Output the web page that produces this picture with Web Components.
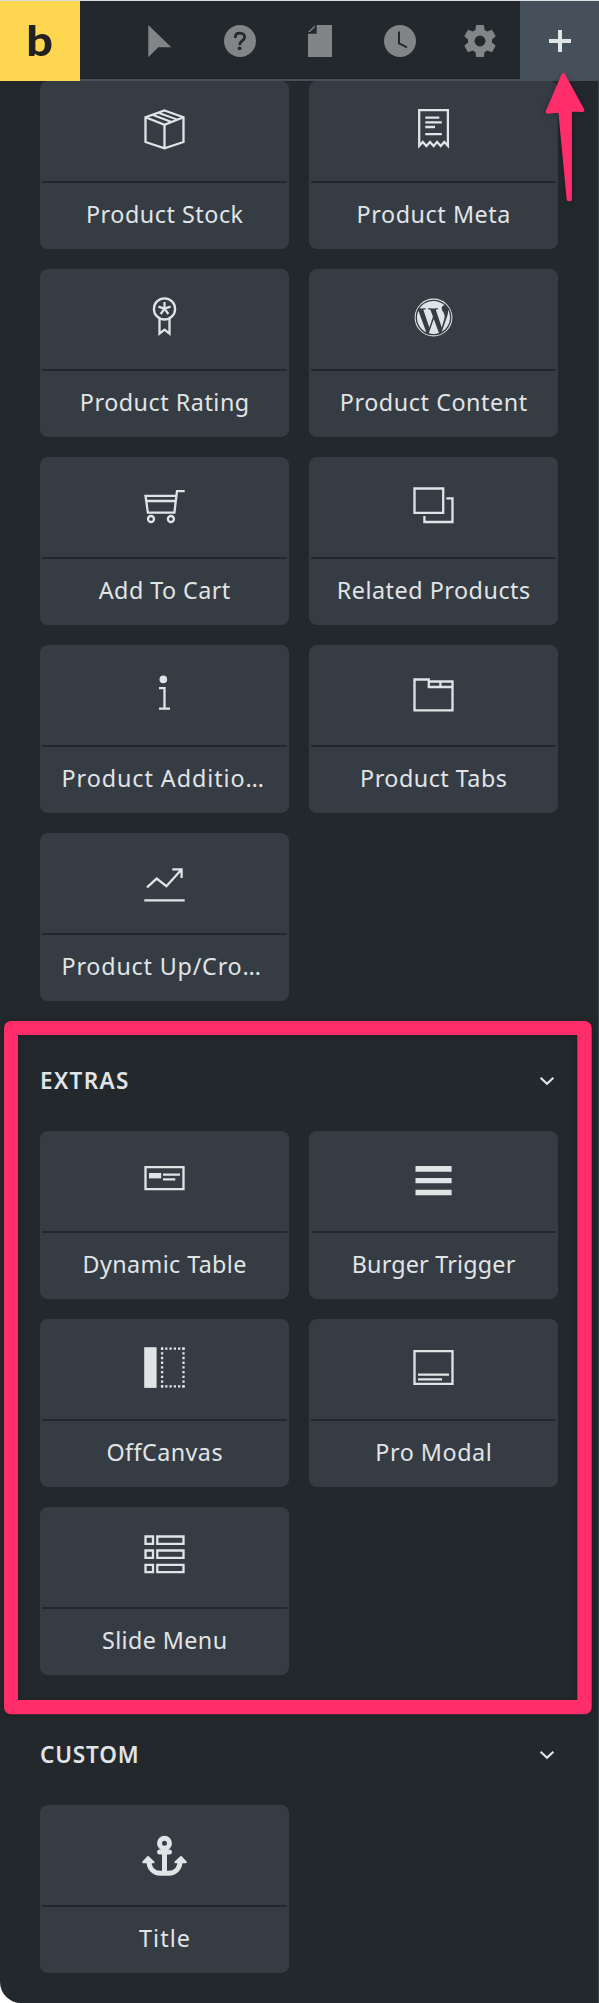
<!DOCTYPE html>
<html lang="en">
<head>
<meta charset="utf-8">
<title>Builder elements</title>
<style>
html, body { margin: 0; background: #fff; }
body { width: 599px; height: 2003px; overflow: hidden; font-family: "Noto Sans", "Open Sans", sans-serif; color: #e1e4e6; }
</style>
</head>
<body>
<builder-panel>
  <tool-bar slot="bar"></tool-bar>
  <element-grid>
    <element-card icon="box" fit="155.7">Product Stock</element-card>
    <element-card icon="receipt" fit="150.7">Product Meta</element-card>
    <element-card icon="ribbon" fit="166">Product Rating</element-card>
    <element-card icon="wordpress" fit="185">Product Content</element-card>
    <element-card icon="cart" fit="131">Add To Cart</element-card>
    <element-card icon="layers" fit="191.3">Related Products</element-card>
    <element-card icon="info" fit="199" clipped>Product Additio…</element-card>
    <element-card icon="tabs" fit="144.7">Product Tabs</element-card>
    <element-card icon="trend" fit="196" clipped>Product Up/Cro…</element-card>
  </element-grid>
  <element-section>
    <fit-text slot="title" fit="86">EXTRAS</fit-text>
    <element-card icon="table" fit="160.7">Dynamic Table</element-card>
    <element-card icon="burger" fit="162">Burger Trigger</element-card>
    <element-card icon="offcanvas" fit="115">OffCanvas</element-card>
    <element-card icon="modal" fit="113.3">Pro Modal</element-card>
    <element-card icon="menu" fit="122.7">Slide Menu</element-card>
  </element-section>
  <element-section>
    <fit-text slot="title" fit="95.7">CUSTOM</fit-text>
    <element-card icon="anchor" fit="49.7">Title</element-card>
  </element-section>
  <highlight-marks slot="marks"></highlight-marks>
</builder-panel>

<script>
const S = 'fill="none" stroke="currentColor" stroke-width="2.3"';
const ICONS = {
  box: `<g ${S}><path d="M24.5 5.5L43.5 12.2V37L24.5 43.4L5.5 37V12.2Z"/><path d="M5.5 12.2L24.5 19.8L43.5 12.2M24.5 19.8V43.4"/><path stroke-width="2" d="M12.4 9.8L31.6 17M18.2 7.8L37.4 14.6"/></g>`,
  receipt: `<g ${S}><path d="M10.2 40.8V5.2H38.9V40.8L35.3 37L31.7 41L28.1 37L24.6 41L21 37L17.4 41L13.8 37Z"/><path d="M16.3 12.7H30.3M16.3 17.4H32.8M16.3 22H26M16.3 29.1H32.8"/></g>`,
  ribbon: `<g ${S}><circle cx="24.5" cy="15.9" r="10.6"/><path d="M19.5 25.5V40.6L24.5 36.6L29.5 40.6V25.5"/><path stroke-width="2.2" d="M24.5 15.6V9M24.5 15.6L30.6 13.6M24.5 15.6L28.3 21M24.5 15.6L20.7 21M24.5 15.6L18.4 13.6"/></g>`,
  wordpress: `<g transform="translate(24.5 24.5) scale(1.585) translate(-12 -12)" fill="currentColor"><path transform="translate(12 12) scale(.965) translate(-12 -12)" d="M21.469 6.825c.84 1.537 1.318 3.3 1.318 5.175 0 3.979-2.156 7.456-5.363 9.325l3.295-9.527c.615-1.54.82-2.771.82-3.864 0-.405-.026-.78-.07-1.11m-7.981.105c.647-.03 1.232-.105 1.232-.105.582-.075.514-.93-.067-.899 0 0-1.755.135-2.88.135-1.064 0-2.85-.15-2.85-.15-.585-.03-.661.855-.075.885 0 0 .54.061 1.125.09l1.68 4.605-2.37 7.08L5.354 6.9c.649-.03 1.234-.1 1.234-.1.585-.075.516-.93-.065-.896 0 0-1.746.138-2.874.138-.2 0-.438-.008-.69-.015C4.911 3.15 8.235 1.215 12 1.215c2.809 0 5.365 1.072 7.286 2.833-.046-.003-.091-.009-.141-.009-1.06 0-1.812.923-1.812 1.914 0 .89.513 1.643 1.06 2.531.411.72.89 1.643.89 2.977 0 .915-.354 1.994-.821 3.479l-1.075 3.585-3.9-11.61.001.014zM12 22.784c-1.059 0-2.081-.153-3.048-.437l3.237-9.406 3.315 9.087c.024.053.05.101.078.149-1.12.393-2.325.609-3.582.609M1.211 12c0-1.564.336-3.05.935-4.39L7.29 21.709C3.694 19.96 1.212 16.271 1.211 12"/><circle cx="12" cy="12" r="11.6" fill="none" stroke="currentColor" stroke-width=".65"/></g>`,
  cart: `<g ${S}><path d="M44.7 10.2H37L34.4 31.7H7.9L5.5 14.9H36.2M6.2 20H35.7"/><circle cx="11" cy="38" r="3"/><circle cx="30.9" cy="38" r="3"/></g>`,
  layers: `<g ${S}><path d="M5.5 7.5H34.2V31.8H5.5ZM37.3 17.4H43.5V41H15.4V35"/></g>`,
  info: `<circle cx="23.3" cy="10.4" r="3.8" fill="currentColor"/><path ${S} d="M19 19.2H24.5V39.7M19 39.7H30"/>`,
  tabs: `<path ${S} d="M5.5 10.5H19.8V18H43.5V41.3H5.5ZM19.8 12.5H43.5V18M31.4 12.5V18"/>`,
  trend: `<path ${S} d="M7 30.4L16.7 21.6L26.4 29.2L41.5 12.6M32.3 12.4H41.6V21M4.3 43.4H44.7"/>`,
  table: `<path ${S} d="M5.5 12.2H43.5V34.2H5.5ZM23 19.7H40M23 24.4H35.3"/><path fill="currentColor" d="M9 18H21.2V23.4H9Z"/>`,
  burger: `<path fill="currentColor" d="M6.5 11.1H42.6V16.7H6.5ZM6.5 22.9H42.6V28.3H6.5ZM6.5 34.8H42.6V40.2H6.5Z"/>`,
  offcanvas: `<path fill="currentColor" d="M4.2 4.2H16.6V44.9H4.2Z"/><g ${S}><path stroke-dasharray="2.3 1.98" d="M20.9 5.6H44.7M20.9 43.4H44.7"/><path stroke-dasharray="2.3 2.43" d="M22.1 4.4V44.8M43.5 4.4V44.8"/></g>`,
  modal: `<path ${S} d="M5.5 8.2H43.5V40.8H5.5ZM9 31.6H40M9 36.3H33"/>`,
  menu: `<path ${S} d="M5.5 5.5H13V12.9H5.5ZM17.3 5.5H43.5V12.9H17.3ZM5.5 19.5H13V26.9H5.5ZM17.3 19.5H43.5V26.9H17.3ZM5.5 33.8H13V41.2H5.5ZM17.3 33.8H43.5V41.2H17.3Z"/>`,
  anchor: `<g fill="none" stroke="currentColor" stroke-width="5"><circle cx="24.5" cy="14.2" r="5"/><path stroke-linecap="round" d="M19.6 23H29.4"/><path d="M24.5 20V44M8.9 31.5C8.9 39.5 13.5 44.3 20.5 44.3H28.5C35.5 44.3 40.1 39.5 40.1 31.5"/></g><path fill="currentColor" stroke="currentColor" stroke-width="2" stroke-linejoin="round" d="M8 28L13.6 33.2H3.2ZM41 28L35.4 33.2H45.8Z"/>`
};

const GEAR = "M19.43 12.98c.04-.32.07-.64.07-.98s-.03-.66-.07-.98l2.11-1.65c.19-.15.24-.42.12-.64l-2-3.46c-.12-.22-.39-.3-.61-.22l-2.49 1c-.52-.4-1.08-.73-1.69-.98l-.38-2.65C14.46 2.18 14.25 2 14 2h-4c-.25 0-.46.18-.49.42l-.38 2.65c-.61.25-1.17.59-1.69.98l-2.49-1c-.23-.09-.49 0-.61.22l-2 3.46c-.13.22-.07.49.12.64l2.11 1.65c-.04.32-.07.65-.07.98s.03.66.07.98l-2.11 1.65c-.19.15-.24.42-.12.64l2 3.46c.12.22.39.3.61.22l2.49-1c.52.4 1.08.73 1.69.98l.38 2.65c.03.24.24.42.49.42h4c.25 0 .46-.18.49-.42l.38-2.65c.61-.25 1.17-.59 1.69-.98l2.49 1c.23.09.49 0 .61-.22l2-3.46c.12-.22.07-.49-.12-.64l-2.11-1.65zM12 15.4a3.4 3.4 0 1 1 0-6.8a3.4 3.4 0 0 1 0 6.8z";

/* Tracks its text so that the ink spans the width given in "fit". */
function track(node, text, width) {
  const cs = getComputedStyle(node);
  const ctx = document.createElement('canvas').getContext('2d');
  ctx.font = `${cs.fontWeight} ${cs.fontSize} ${cs.fontFamily}`;
  const m = ctx.measureText(text);
  const ink = m.actualBoundingBoxRight + m.actualBoundingBoxLeft;
  const gap = (width - ink) / (text.length - 1);
  node.style.letterSpacing = gap.toFixed(3) + 'px';
  node.style.marginRight = (-gap).toFixed(3) + 'px';
}

function define(name, html, setup) {
  customElements.define(name, class extends HTMLElement {
    constructor() {
      super();
      this.attachShadow({ mode: 'open' }).innerHTML = html;
    }
    connectedCallback() { if (setup) setup(this, this.shadowRoot); }
  });
}

define('builder-panel', `
<style>
:host { display: block; position: relative; width: 599px; height: 2003px; box-sizing: border-box; background: #23282c; border-top: 1px solid #d9dfdc; border-bottom-left-radius: 21px; overflow: hidden; }
main { height: 1922px; box-sizing: border-box; padding: 0 40px; border-right: 1px solid #3b4550; }
</style>
<slot name="bar"></slot><main><slot></slot></main><slot name="marks"></slot>`);

define('tool-bar', `
<style>
:host { display: flex; height: 80px; color: #818587; }
.logo { width: 80px; height: 80px; background: #ffd64f; color: #212121; display: flex; align-items: center; justify-content: center; font: 900 41px/80px Lato, sans-serif; }
.logo span { transform: scaleX(1.14); }
nav { flex: 1; box-sizing: border-box; display: flex; padding-left: 40px; border-bottom: 2px solid #46505a; }
nav svg { width: 80px; height: 80px; flex: none; }
.add { width: 79px; height: 80px; background: #46505a; color: #e1e4e6; overflow: hidden; }
svg { display: block; }
</style>
<div class="logo"><span>b</span></div>
<nav>
<svg viewBox="0 0 80 80"><path fill="currentColor" d="M28.3 24L51.3 46.2H38.3L28.3 56.2Z"/></svg>
<svg viewBox="0 0 80 80"><circle cx="40" cy="40" r="16" fill="currentColor"/><path fill="none" stroke="#23282c" stroke-width="2.7" d="M35.3 37V36.2C35.3 33.6 37.2 32.2 40 32.2S44.7 34 44.7 36.2C44.7 39.6 39.6 39.8 39.6 44"/><circle cx="39.6" cy="47.3" r="1.9" fill="#23282c"/></svg>
<svg viewBox="0 0 80 80"><path fill="currentColor" d="M36.7 24H52V56H28V32.7H36.7Z"/><path fill="currentColor" d="M28 30.9L34.9 24V30.9Z" transform="translate(0 .2)"/><path fill="#23282c" d="M29.8 31.2L35.2 25.8V31.2Z"/></svg>
<svg viewBox="0 0 80 80"><circle cx="40" cy="40" r="16" fill="currentColor"/><path fill="none" stroke="#23282c" stroke-width="2" d="M39 30.5V42.3L47 46.4"/></svg>
<svg viewBox="0 0 80 80"><path fill="currentColor" transform="translate(20.8 20.8) scale(1.6)" d="${GEAR}"/></svg>
</nav>
<div class="add"><svg width="80" height="80" viewBox="0 0 80 80"><path fill="none" stroke="currentColor" stroke-width="4" d="M29 40H51M40 29V51"/></svg></div>`);

define('fit-text', `
<style>:host { display: inline-block; white-space: nowrap; font-size: 22.5px; font-weight: 600; line-height: 30px; }</style><slot></slot>`,
  el => track(el, el.textContent, +el.getAttribute('fit')));

define('element-grid', `
<style>:host { display: grid; grid-template-columns: 249px 249px; gap: 20px; }</style><slot></slot>`);

define('element-section', `
<style>
:host { display: block; margin-top: 30px; }
header { height: 100px; display: flex; align-items: center; justify-content: space-between; }
svg { width: 22px; height: 22px; display: block; }
</style>
<header><slot name="title"></slot><svg viewBox="0 0 22 22"><path fill="none" stroke="currentColor" stroke-width="2.2" d="M4.6 7.8L11 13.8L17.4 7.8"/></svg></header>
<element-grid><slot></slot></element-grid>`);

define('element-card', `
<style>
:host { display: flex; flex-direction: column; width: 249px; height: 168px; box-sizing: border-box; padding: 0 2px; border-radius: 8px; background: #353c44; }
.icon { height: 100px; border-bottom: 2px solid #23282c; display: flex; justify-content: center; align-items: flex-start; }
svg { width: 49px; height: 49px; margin-top: 24px; display: block; }
.label { height: 66px; box-sizing: border-box; padding: 0 20px 4px; display: flex; align-items: center; justify-content: center; font-size: 23.3px; line-height: 32px; }
:host([clipped]) .label { justify-content: flex-start; padding-left: 19.5px; }
.text { white-space: nowrap; flex: none; }
</style>
<div class="icon"></div>
<div class="label"><span class="text"><slot></slot></span></div>`,
  (el, root) => {
    root.querySelector('.icon').innerHTML = `<svg viewBox="0 0 49 49">${ICONS[el.getAttribute('icon')]}</svg>`;
    track(root.querySelector('.text'), el.textContent, +el.getAttribute('fit'));
  });

define('highlight-marks', `
<style>
:host { color: #ff2e6b; }
.frame { position: absolute; left: 4px; top: 1019.5px; width: 588px; height: 693.5px; }
.frame svg, .arrow { display: block; overflow: visible; filter: drop-shadow(0 1px 3px rgba(0,0,0,.25)); }
.arrow { position: absolute; left: 530px; top: 60px; }
</style>
<div class="frame"><svg width="588" height="694"><path fill="currentColor" fill-rule="evenodd" d="M7 0H580.7a7 7 0 0 1 7 7V686.3a7 7 0 0 1-7 7H7a7 7 0 0 1-7-7V7a7 7 0 0 1 7-7ZM14 14V679H573.3V14Z"/></svg></div>
<svg class="arrow" width="69" height="150" viewBox="530 61 69 150"><path fill="currentColor" stroke="currentColor" stroke-width="4" stroke-linejoin="round" d="M563.3 75.2L582.4 110.1L569.9 109.6V199.2H568.7L560.2 110.6L547.7 111.8Z"/></svg>`);
</script>
</body>
</html>
